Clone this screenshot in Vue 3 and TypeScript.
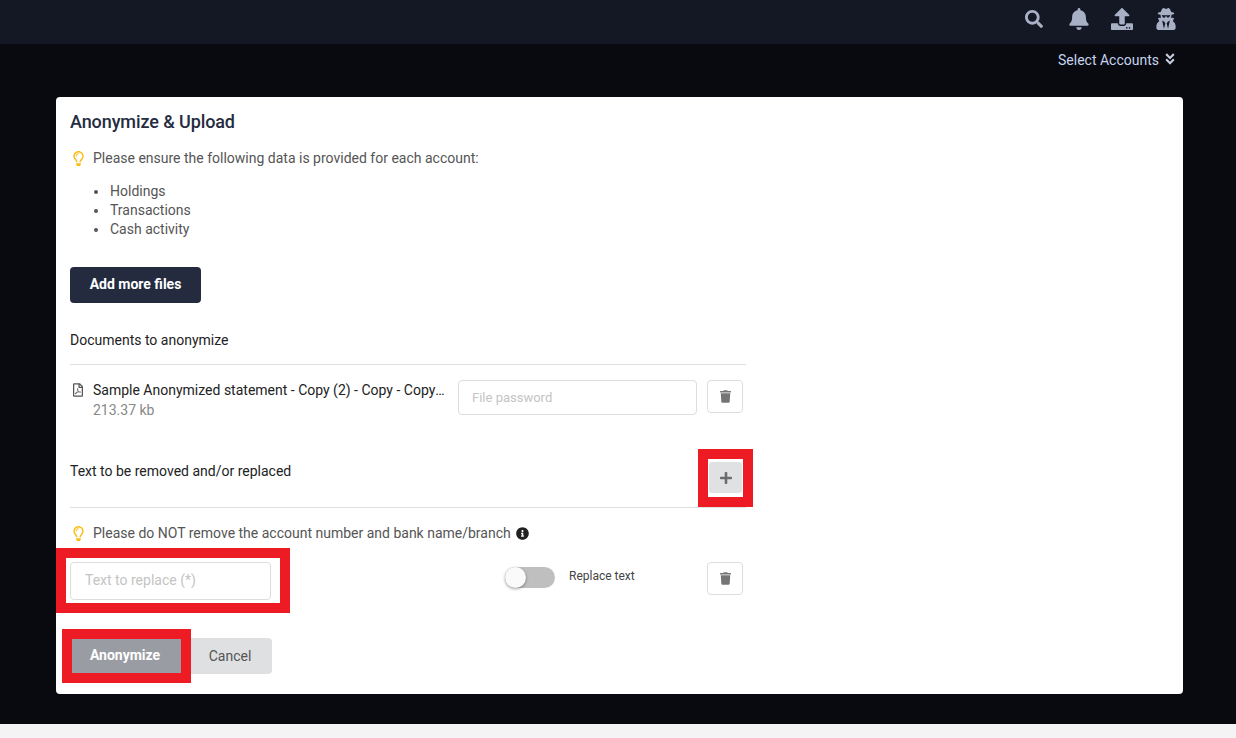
<script setup lang="ts">
const icons = {
  search: { box: '0 0 512 512', d: 'M505 442.7L405.3 343c-4.5-4.5-10.6-7-17-7H372c27.6-35.3 44-79.7 44-128C416 93.1 322.9 0 208 0S0 93.1 0 208s93.1 208 208 208c48.3 0 92.7-16.4 128-44v16.3c0 6.4 2.5 12.5 7 17l99.7 99.7c9.4 9.4 24.6 9.4 33.9 0l28.3-28.3c9.4-9.4 9.4-24.6.1-34zM208 336c-70.7 0-128-57.2-128-128 0-70.7 57.2-128 128-128 70.7 0 128 57.2 128 128 0 70.7-57.2 128-128 128z' },
  bell: { box: '0 0 448 512', d: 'M224 512c35.32 0 63.97-28.65 63.97-64H160.03c0 35.35 28.65 64 63.97 64zm215.39-149.71c-19.32-20.76-55.47-51.99-55.47-154.29 0-77.7-54.48-139.9-127.94-155.16V32c0-17.67-14.32-32-31.98-32s-31.98 14.33-31.98 32v20.84C118.56 68.1 64.08 130.3 64.08 208c0 102.3-36.15 133.53-55.47 154.29-6 6.45-8.66 14.16-8.61 21.71.11 16.4 12.98 32 32.1 32h383.8c19.12 0 32-15.6 32.1-32 .05-7.55-2.61-15.27-8.61-21.71z' },
  upload: { box: '0 0 512 512', d: 'M296 384h-80c-13.3 0-24-10.7-24-24V192h-87.7c-17.8 0-26.7-21.5-14.1-34.1L242.3 5.7c7.5-7.5 19.8-7.5 27.3 0l152.2 152.2c12.6 12.6 3.7 34.1-14.1 34.1H320v168c0 13.3-10.7 24-24 24zm216-8v112c0 13.3-10.7 24-24 24H24c-13.3 0-24-10.7-24-24V376c0-13.3 10.7-24 24-24h136v8c0 30.9 25.1 56 56 56h80c30.9 0 56-25.1 56-56v-8h136c13.3 0 24 10.7 24 24zm-124 88c0-11-9-20-20-20s-20 9-20 20 9 20 20 20 20-9 20-20zm64 0c0-11-9-20-20-20s-20 9-20 20 9 20 20 20 20-9 20-20z' },
  secret: { box: '0 0 448 512', d: 'M383.9 308.3l23.9-62.6c4-10.5-3.7-21.7-15-21.7h-58.5c11-18.9 17.8-40.6 17.8-64v-.3c39.2-7.8 64-19.1 64-31.7 0-13.3-27.3-25.1-70.1-33-9.2-32.8-27-65.8-40.6-82.8-9.5-11.9-25.9-15.6-39.5-8.8l-27.6 13.8c-9 4.5-19.6 4.5-28.6 0L182.1 3.4c-13.6-6.8-30-3.1-39.5 8.8-13.5 17-31.4 50-40.6 82.8-42.7 7.9-70 19.7-70 33 0 12.6 24.8 23.9 64 31.7v.3c0 23.4 6.8 45.1 17.8 64H56.3c-11.5 0-19.2 11.7-14.7 22.3l25.8 60.2C27.3 329.8 0 372.7 0 422.4v44.8C0 491.9 20.1 512 44.8 512h358.4c24.7 0 44.8-20.1 44.8-44.8v-44.8c0-48.4-25.8-90.4-64.1-114.1zM176 480l-41.6-192 49.6 32 24 40-32 120zm96 0l-32-120 24-40 49.6-32L272 480zm41.7-298.5c-3.9 11.9-7 24.6-16.5 33.4-10.1 9.3-48 22.4-64-25-2.8-8.4-15.4-8.4-18.3 0-17 50.2-56 32.4-64 25-9.5-8.8-12.7-21.5-16.5-33.4-.8-2.5-6.3-5.7-6.3-5.8v-10.8c28.3 3.6 61 5.8 96 5.8s67.7-2.1 96-5.8v10.8c-.1.1-5.6 3.2-6.4 5.8z' },
  chevrons: { box: '0 0 320 512', d: 'M143 256.3L7 120.3c-9.4-9.4-9.4-24.6 0-33.9l22.6-22.6c9.4-9.4 24.6-9.4 33.9 0l96.4 96.4 96.4-96.4c9.4-9.4 24.6-9.4 33.9 0L313 86.3c9.4 9.4 9.4 24.6 0 33.9l-136 136c-9.4 9.5-24.6 9.5-34 .1zm34 192l136-136c9.4-9.4 9.4-24.6 0-33.9l-22.6-22.6c-9.4-9.4-24.6-9.4-33.9 0L160 352.1l-96.4-96.4c-9.4-9.4-24.6-9.4-33.9 0L7 278.3c-9.4 9.4-9.4 24.6 0 33.9l136 136c9.4 9.5 24.6 9.5 34 .1z' },
  bulb: { box: '0 0 352 512', d: 'M176 80c-52.94 0-96 43.06-96 96 0 8.84 7.16 16 16 16s16-7.16 16-16c0-35.3 28.72-64 64-64 8.84 0 16-7.16 16-16s-7.16-16-16-16zM96.06 459.17c0 3.15.93 6.22 2.68 8.84l24.51 36.84c2.97 4.46 7.97 7.14 13.32 7.14h78.85c5.36 0 10.36-2.68 13.32-7.14l24.51-36.84c1.74-2.62 2.67-5.7 2.68-8.84l.05-43.18H96.02l.04 43.18zM176 0C73.72 0 0 82.97 0 176c0 44.37 16.45 84.85 43.56 115.78 16.64 18.99 42.74 58.8 52.42 92.16v.06h48v-.12c-.01-4.77-.72-9.51-2.15-14.07-5.59-17.81-22.82-64.77-62.17-109.67-20.54-23.43-31.52-53.15-31.61-84.14-.2-73.64 59.67-128 127.95-128 70.58 0 128 57.42 128 128 0 30.97-11.24 60.85-31.65 84.14-39.11 44.61-56.42 91.47-62.1 109.46a47.507 47.507 0 0 0-2.22 14.3v.1h48v-.05c9.68-33.37 35.78-73.18 52.42-92.16C335.55 260.85 352 220.37 352 176 352 78.8 273.2 0 176 0z' },
  pdf: { box: '0 0 384 512', d: 'M369.9 97.9L286 14C277 5 264.8-.1 252.1-.1H48C21.5 0 0 21.5 0 48v416c0 26.5 21.5 48 48 48h288c26.5 0 48-21.5 48-48V131.9c0-12.7-5.1-25-14.1-34zM332.1 128H256V51.9l76.1 76.1zM48 464V48h160v104c0 13.3 10.7 24 24 24h104v288H48zm250.2-143.7c-12.2-12-47-8.7-64.4-6.5-17.2-10.5-28.7-25-36.8-46.3 3.9-16.1 10.1-40.6 5.4-56-4.2-26.2-37.8-23.6-42.6-5.9-4.4 16.1-.4 38.5 7 67.1-10 23.9-24.9 56-35.4 74.4-20 10.3-47 26.2-51 46.2-3.3 15.8 26 55.2 76.1-31.2 22.4-7.4 46.8-16.5 68.4-20.1 18.9 10.2 41 17 55.8 17 25.5 0 28-28.2 17.5-38.7zm-198.1 77.8c5.1-13.7 24.5-29.5 30.4-35-19 30.3-30.4 35.7-30.4 35zm81.6-190.6c7.4 0 6.7 32.1 1.8 40.8-4.4-13.9-4.3-40.8-1.8-40.8zm-24.4 136.6c9.7-16.9 18-37 24.7-54.7 8.3 15.1 18.9 27.2 30.1 35.5-20.8 4.3-38.9 13.1-54.8 19.2zm131.6-5s-5 6-37.3-7.8c35.1-2.6 40.9 5.4 37.3 7.8z' },
  trash: { box: '0 0 448 512', d: 'M432 32H312l-9.4-18.7A24 24 0 0 0 281.1 0H166.8a23.72 23.72 0 0 0-21.4 13.3L136 32H16A16 16 0 0 0 0 48v32a16 16 0 0 0 16 16h416a16 16 0 0 0 16-16V48a16 16 0 0 0-16-16zM53.2 467a48 48 0 0 0 47.9 45h245.8a48 48 0 0 0 47.9-45L416 128H32z' },
  plus: { box: '0 0 448 512', d: 'M416 208H272V64c0-17.67-14.33-32-32-32h-32c-17.67 0-32 14.33-32 32v144H32c-17.67 0-32 14.33-32 32v32c0 17.67 14.33 32 32 32h144v144c0 17.67 14.33 32 32 32h32c17.67 0 32-14.33 32-32V304h144c17.67 0 32-14.33 32-32v-32c0-17.67-14.33-32-32-32z' },
  info: { box: '0 0 512 512', d: 'M256 8C119.043 8 8 119.083 8 256c0 136.997 111.043 248 248 248s248-111.003 248-248C504 119.083 392.957 8 256 8zm0 110c23.196 0 42 18.804 42 42s-18.804 42-42 42-42-18.804-42-42 18.804-42 42-42zm56 254c0 6.627-5.373 12-12 12h-88c-6.627 0-12-5.373-12-12v-24c0-6.627 5.373-12 12-12h12v-64h-12c-6.627 0-12-5.373-12-12v-24c0-6.627 5.373-12 12-12h64c6.627 0 12 5.373 12 12v100h12c6.627 0 12 5.373 12 12v24z' }
}
const navIcons = [
  { ...icons.search, cls: 'nav-search' },
  { ...icons.bell, cls: 'nav-bell' },
  { ...icons.upload, cls: 'nav-upload' },
  { ...icons.secret, cls: 'nav-secret' }
]
const required = ['Holdings', 'Transactions', 'Cash activity']
</script>

<template>
  <div class="page">
    <header class="topbar">
      <svg v-for="icon in navIcons" :key="icon.cls" class="nav-icon" :class="icon.cls" :viewBox="icon.box"><path :d="icon.d" /></svg>
    </header>
    <div class="account-row">
      <span>Select Accounts</span>
      <svg class="chevrons" :viewBox="icons.chevrons.box"><path :d="icons.chevrons.d" /></svg>
    </div>
    <main class="main">
      <section class="card">
        <h1 class="title">Anonymize &amp; Upload</h1>
        <div class="hint first-hint">
          <svg class="bulb" :viewBox="icons.bulb.box"><path :d="icons.bulb.d" /></svg>
          <span>Please ensure the following data is provided for each account:</span>
        </div>
        <ul class="list">
          <li v-for="item in required" :key="item">{{ item }}</li>
        </ul>
        <button class="btn add-btn">Add more files</button>

        <div class="form-area">
          <div class="section-head docs-head">Documents to anonymize</div>
          <div class="file-row">
            <svg class="pdf" :viewBox="icons.pdf.box"><path :d="icons.pdf.d" /></svg>
            <div class="file-info">
              <div class="file-name">Sample Anonymized statement - Copy (2) - Copy - Copy - Copy.pdf</div>
              <div class="file-size">213.37 kb</div>
            </div>
            <input class="input password" placeholder="File password" />
            <button class="icon-btn">
              <svg class="trash" :viewBox="icons.trash.box"><path :d="icons.trash.d" /></svg>
            </button>
          </div>

          <div class="section-head replace-head">
            <span class="replace-title">Text to be removed and/or replaced</span>
            <div class="plus-frame">
              <button class="plus-btn">
                <svg class="plus" :viewBox="icons.plus.box"><path :d="icons.plus.d" /></svg>
              </button>
            </div>
          </div>
          <div class="hint second-hint">
            <svg class="bulb" :viewBox="icons.bulb.box"><path :d="icons.bulb.d" /></svg>
            <span>Please do NOT remove the account number and bank name/branch</span>
            <svg class="info" :viewBox="icons.info.box"><path :d="icons.info.d" /></svg>
          </div>
          <div class="replace-row">
            <div class="replace-field">
              <input class="input replace-input" placeholder="Text to replace (*)" />
            </div>
            <div class="toggle"><span class="knob"></span></div>
            <span class="toggle-label">Replace text</span>
            <button class="icon-btn row-trash">
              <svg class="trash" :viewBox="icons.trash.box"><path :d="icons.trash.d" /></svg>
            </button>
          </div>
        </div>

        <div class="actions">
          <button class="btn anonymize">Anonymize</button>
          <button class="btn cancel">Cancel</button>
        </div>
      </section>
    </main>
    <footer class="footer"></footer>
  </div>
</template>

<style>
html, body { margin: 0; padding: 0; }
</style>

<style scoped>
.page {
  height: 738px;
  overflow: hidden;
  display: flex;
  flex-direction: column;
  background: #090a0f;
  font-family: Roboto, "Liberation Sans", sans-serif;
  font-size: 14px;
  color: #555;
}
.topbar {
  height: 44px;
  flex: none;
  display: flex;
  align-items: center;
  justify-content: flex-end;
  padding-right: 60px;
  background: #141824;
  box-sizing: border-box;
}
.nav-icon { fill: #a8b0c6; margin-bottom: 6px; flex: none; }
.nav-search { width: 18px; height: 18px; }
.nav-bell { width: 20px; height: 22px; margin-left: 26px; }
.nav-upload { width: 22px; height: 22px; margin-left: 22px; }
.nav-secret { width: 20px; height: 22px; margin-left: 23px; }
.account-row {
  height: 32px;
  flex: none;
  display: flex;
  align-items: center;
  justify-content: flex-end;
  gap: 6px;
  padding-right: 61px;
  color: #c5d3ee;
}
.chevrons { width: 10px; height: 14px; fill: #c5cde0; margin-top: -2px; }
.main { flex: 1; padding: 21px 53px 30px 56px; min-height: 0; }
.card {
  height: 597px;
  box-sizing: border-box;
  background: #fff;
  border-radius: 4px;
  padding: 13px 14px 0;
}
.title {
  margin: 0;
  font-size: 18px;
  line-height: 24px;
  font-weight: 500;
  letter-spacing: -0.1px;
  color: #262c40;
}
.hint { display: flex; align-items: center; height: 20px; line-height: 20px; }
.first-hint { margin-top: 14px; }
.bulb { width: 11px; height: 15px; fill: #fbbc15; margin: 0 9px 0 3px; flex: none; }
.list { margin: 14px 0 0; padding: 0 0 0 39px; line-height: 19px; }
.list li { padding-left: 1px; }
.btn {
  border: 0;
  font-family: inherit;
  font-size: 14px;
  cursor: pointer;
  padding: 0;
}
.add-btn {
  display: block;
  margin-top: 28px;
  width: 131px;
  height: 36px;
  padding-bottom: 2px;
  border-radius: 4px;
  background: #242b3f;
  color: #fff;
  font-weight: 700;
}
.form-area { width: 676px; }
.section-head { border-bottom: 1px solid #e0e0e0; color: #222; }
.docs-head { margin-top: 27px; height: 34px; line-height: 20px; }
.file-row { display: flex; align-items: flex-start; margin-top: 15px; height: 69px; }
.pdf { width: 10px; height: 14px; margin: 3px 0 0 3px; flex: none; fill: #555; }
.file-info { width: 353px; margin-left: 10px; flex: none; }
.file-name {
  line-height: 20px;
  color: #222;
  white-space: nowrap;
  overflow: hidden;
  text-overflow: ellipsis;
}
.file-size { line-height: 20px; color: #888; }
.input {
  box-sizing: border-box;
  border: 1px solid #ddd;
  border-radius: 4px;
  background: #fff;
  font-family: inherit;
  font-size: 14px;
  padding: 0 13px;
  outline: 0;
  color: #333;
}
.input::placeholder { color: #c4c4c4; opacity: 1; }
.password { width: 239px; height: 35px; margin-left: 12px; flex: none; font-size: 13px; }
.icon-btn {
  width: 36px;
  height: 33px;
  margin-left: 10px;
  flex: none;
  display: flex;
  align-items: center;
  justify-content: center;
  background: #fff;
  border: 1px solid #ddd;
  border-radius: 4px;
  padding: 0;
}
.trash { width: 11px; height: 13px; fill: #757575; }
.replace-head {
  display: flex;
  justify-content: space-between;
  align-items: flex-start;
  height: 58px;
  padding-right: 3px;
}
.replace-title { line-height: 20px; margin-top: 12px; color: #222; }
.plus-frame {
  box-sizing: border-box;
  width: 35px;
  height: 38px;
  margin-top: 10px;
  padding: 3px 1px 4px;
  outline: 10px solid #ed1c24;
  background: #fff;
}
.plus-btn {
  width: 33px;
  height: 31px;
  display: flex;
  align-items: center;
  justify-content: center;
  background: #e0e1e3;
  border: 0;
  border-radius: 3px;
  padding: 0;
}
.plus { width: 12px; height: 14px; fill: #6b6b6b; }
.second-hint { margin-top: 15px; }
.info { width: 13px; height: 13px; fill: #212121; margin-left: 5px; }
.replace-row { display: flex; align-items: flex-start; margin-top: 15px; height: 51px; }
.replace-field {
  box-sizing: border-box;
  width: 214px;
  height: 45px;
  margin-left: -4px;
  padding: 4px 9px 3px 4px;
  background: #fff;
  outline: 10px solid #ed1c24;
  flex: none;
}
.replace-input { width: 201px; height: 38px; padding: 0 13px 2px 14px; }
.toggle {
  width: 50px;
  height: 21px;
  margin: 9px 0 0 225px;
  border-radius: 11px;
  background: #bfbfbf;
  flex: none;
}
.knob {
  display: block;
  width: 21px;
  height: 21px;
  border-radius: 50%;
  background: #fafafa;
  box-shadow: 0 1px 3px rgba(0, 0, 0, 0.4);
}
.toggle-label { margin: 9px 0 0 14px; font-size: 12px; line-height: 18px; color: #444; width: 128px; flex: none; }
.row-trash { margin-top: 4px; }
.actions { display: flex; align-items: center; margin-top: 29px; padding-left: 2px; }
.anonymize {
  position: relative;
  z-index: 1;
  width: 109px;
  height: 34px;
  padding: 0 3px 2px 0;
  background: #9a9ca4;
  color: #fff;
  font-weight: 700;
  outline: 10px solid #ed1c24;
}
.cancel {
  width: 84px;
  height: 36px;
  margin-left: 7px;
  border-radius: 0 4px 4px 0;
  background: #dfe0e2;
  color: #555;
  font-weight: 400;
}
.footer { height: 14px; flex: none; background: #f4f4f4; }
</style>
